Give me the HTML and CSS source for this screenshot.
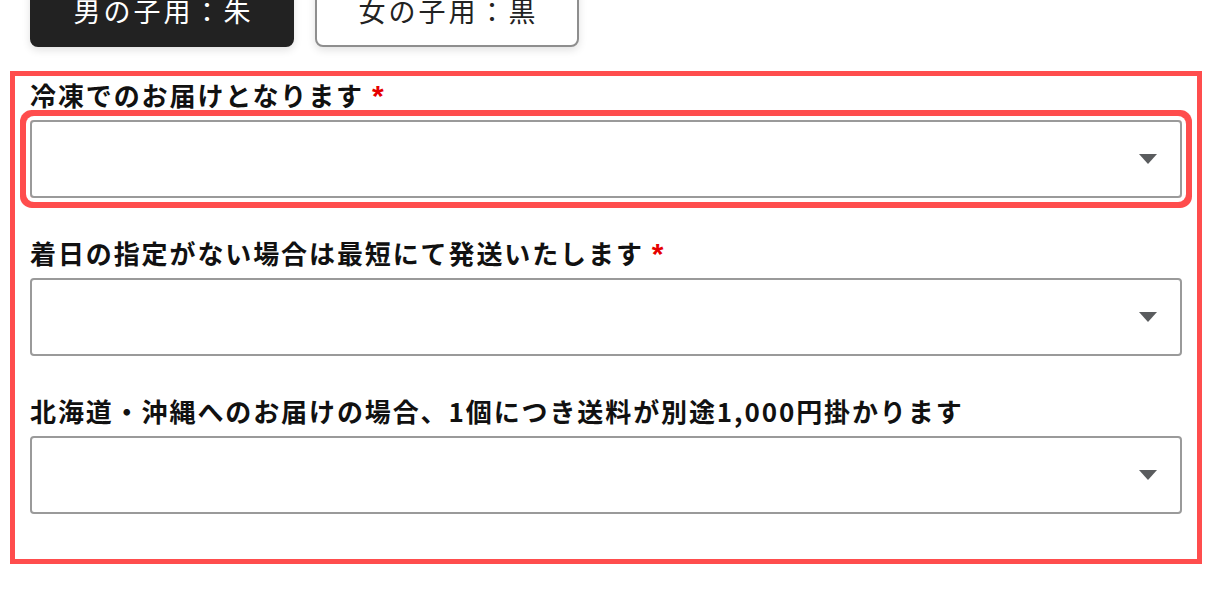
FILE: index.html
```html
<!DOCTYPE html>
<html lang="ja">
<head>
<meta charset="utf-8">
<title>Form</title>
<link rel="stylesheet" href="styles.css">
</head>
<body>
<div class="page">
  <div class="variants">
    <button class="variant variant--active" type="button">男の子用：朱</button>
    <button class="variant" type="button">女の子用：黒</button>
  </div>
  <div class="options">
    <div class="field">
      <label class="field__label">冷凍でのお届けとなります<span class="req">*</span></label>
      <div class="select-wrap is-focused"><select class="select"><option></option></select></div>
    </div>
    <div class="field">
      <label class="field__label">着日の指定がない場合は最短にて発送いたします<span class="req">*</span></label>
      <div class="select-wrap"><select class="select"><option></option></select></div>
    </div>
    <div class="field">
      <label class="field__label">北海道・沖縄へのお届けの場合、1個につき送料が別途1,000円掛かります</label>
      <div class="select-wrap"><select class="select"><option></option></select></div>
    </div>
  </div>
</div>
</body>
</html>
```
FILE: styles.css
```css
* { box-sizing: border-box; }
html, body { margin: 0; padding: 0; background: #fff; }
body {
  font-family: "Noto Sans CJK JP", "Noto Sans", sans-serif;
  color: #111;
  overflow: hidden;
}
.page {
  padding: 0 10px;
}
.variants {
  display: flex;
  gap: 21px;
  margin: -26px 0 0 20px;
}
.variant {
  width: 264px;
  height: 73px;
  border-radius: 8px;
  font-family: "Noto Sans CJK JP", sans-serif;
  font-weight: 400;
  font-size: 27px;
  letter-spacing: 3px;
  padding: 0 0 0 3px;
  background: #fff;
  color: #222;
  border: 2px solid #8e8e8e;
  box-shadow: 0 3px 8px rgba(0, 0, 0, 0.12);
}
.variant--active {
  background: #222;
  color: #fff;
  border-color: #222;
}
.options {
  margin-top: 24px;
  border: 5px solid #ff4d4d;
  padding: 2px 15px 45px 15px;
  display: flex;
  flex-direction: column;
  gap: 38px;
}
.field {
  display: flex;
  flex-direction: column;
  gap: 8px;
}
.field__label {
  display: block;
  font-weight: 700;
  font-size: 26px;
  line-height: 34px;
  height: 34px;
  letter-spacing: 1.9px;
  color: #111;
}
.req {
  color: #e60000;
  font-family: "Liberation Sans", sans-serif;
  font-weight: 700;
  font-size: 30px;
  line-height: 0;
  margin-left: 8px;
}
.select-wrap {
  position: relative;
  border-radius: 4px;
}
.select-wrap.is-focused {
  box-shadow: 0 0 0 4px #fff, 0 0 0 10px #ff4d4d;
  border-radius: 4px;
}
.select-wrap::after {
  content: "";
  position: absolute;
  right: 25px;
  top: 34px;
  width: 0;
  height: 0;
  border-left: 9.5px solid transparent;
  border-right: 9.5px solid transparent;
  border-top: 10px solid #5a5c5e;
  pointer-events: none;
}
.select {
  display: block;
  width: 100%;
  height: 78px;
  appearance: none;
  -webkit-appearance: none;
  background: #fff;
  border: 2px solid #9a9a9a;
  border-radius: 4px;
  font-family: inherit;
  font-size: 20px;
  padding: 0 60px 0 16px;
  outline: none;
}
```
